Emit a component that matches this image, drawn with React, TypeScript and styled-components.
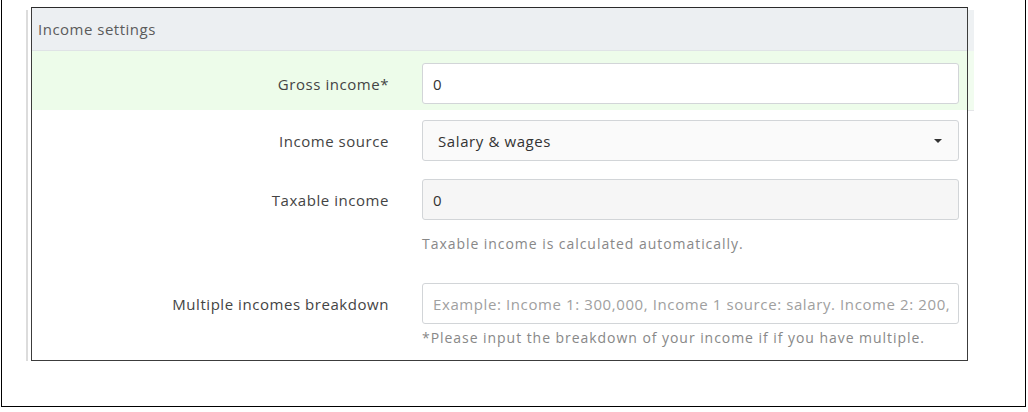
import React from "react";
import styled, { createGlobalStyle } from "styled-components";

const GlobalStyle = createGlobalStyle`
  html, body { margin: 0; padding: 0; background: #ffffff; }
  body { font-family: "Open Sans", "Liberation Sans", sans-serif; }
  * { box-sizing: border-box; }
`;

const Frame = styled.div`
  margin-left: 1px;
  width: 1025px;
  height: 407px;
  border: 1px solid #000;
  border-top: none;
  padding: 7px 0 0 24px;
  display: flex;
  align-items: flex-start;
`;

const Shade = styled.div`
  margin-top: 3px;
  padding: 0 0 0 3px;
  border-left: 2px solid #dcdcdc;
  display: flex;
  align-items: flex-start;
`;

const Panel = styled.section`
  margin-top: -3px;
  width: 937px;
  height: 354px;
  border: 1px solid #3c3c3c;
  border-top-color: #2a2a2a;
  background: #fff;
  display: flex;
  flex-direction: column;
`;

const Peek = styled.div`
  width: 6px;
  display: flex;
  flex-direction: column;
`;

const PeekBlock = styled.div<{ $h: number; $bg: string; $line?: string }>`
  height: ${(p) => p.$h}px;
  background: ${(p) => p.$bg};
  border-bottom: 1px solid ${(p) => p.$line || "transparent"};
`;

const PanelHeader = styled.header`
  height: 43px;
  background: #eceff2;
  border-bottom: 1px solid #dfe3e6;
  display: flex;
  align-items: center;
  padding-left: 6px;
  font-size: 15px;
  letter-spacing: 0.5px;
  color: #5b5b5b;
`;

const Row = styled.div<{ $highlight?: boolean; $pt: number; $pb: number }>`
  display: flex;
  align-items: flex-start;
  padding: ${(p) => p.$pt}px 8px ${(p) => p.$pb}px 0;
  background: ${(p) => (p.$highlight ? "#edfcea" : "transparent")};
`;

const Label = styled.label`
  width: 357px;
  height: 41px;
  display: flex;
  align-items: center;
  justify-content: flex-end;
  font-size: 15px;
  letter-spacing: 0.55px;
  color: #444;
`;

const Control = styled.div`
  margin-left: 33px;
  width: 537px;
  display: flex;
  flex-direction: column;
`;

const Field = styled.div<{ $bg?: string; $color?: string; $pl?: number }>`
  height: 41px;
  border: 1px solid #d2d5d8;
  border-radius: 3px;
  background: ${(p) => p.$bg || "#fff"};
  display: flex;
  align-items: center;
  justify-content: space-between;
  padding: 0 16px 0 ${(p) => p.$pl ?? 10}px;
  font-size: 15px;
  letter-spacing: 0.6px;
  color: ${(p) => p.$color || "#333"};
  white-space: nowrap;
  overflow: hidden;
`;

const Caret = styled.span`
  width: 0;
  height: 0;
  border-left: 4px solid transparent;
  border-right: 4px solid transparent;
  border-top: 4px solid #333;
`;

const Help = styled.div<{ $mt: number }>`
  margin-top: ${(p) => p.$mt}px;
  font-size: 14px;
  line-height: 18px;
  letter-spacing: 0.95px;
  color: #888;
  white-space: nowrap;
`;

export default function App() {
  return (
    <>
      <GlobalStyle />
      <Frame>
        <Shade>
          <Panel>
            <PanelHeader>Income settings</PanelHeader>
            <Row $highlight $pt={12} $pb={6}>
              <Label>Gross income*</Label>
              <Control>
                <Field>0</Field>
              </Control>
            </Row>
            <Row $pt={10} $pb={0}>
              <Label>Income source</Label>
              <Control>
                <Field $bg="#fafafa" $pl={15}>
                  <span>Salary &amp; wages</span>
                  <Caret />
                </Field>
              </Control>
            </Row>
            <Row $pt={18} $pb={0}>
              <Label>Taxable income</Label>
              <Control>
                <Field $bg="#f6f6f6">0</Field>
                <Help $mt={15}>Taxable income is calculated automatically.</Help>
              </Control>
            </Row>
            <Row $pt={30} $pb={0}>
              <Label>Multiple incomes breakdown</Label>
              <Control>
                <Field $color="#a0a0a0">
                  Example: Income 1: 300,000, Income 1 source: salary. Income 2: 200,
                </Field>
                <Help $mt={5}>*Please input the breakdown of your income if if you have multiple.</Help>
              </Control>
            </Row>
          </Panel>
          <Peek>
            <PeekBlock $h={41} $bg="#eef1f3" />
            <PeekBlock $h={60} $bg="#f1fcef" $line="#e4e6e8" />
          </Peek>
        </Shade>
      </Frame>
    </>
  );
}
